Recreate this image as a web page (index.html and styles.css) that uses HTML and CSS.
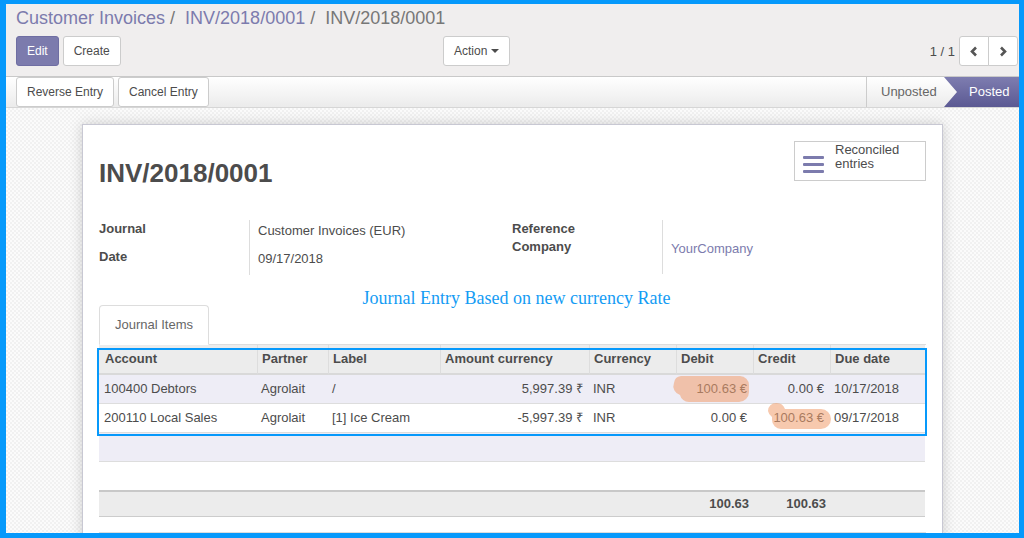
FILE: index.html
```html
<!DOCTYPE html>
<html>
<head>
<meta charset="utf-8">
<link rel="stylesheet" href="styles.css">
</head>
<body>
<div class="frame">
  <div class="app">
    <div class="cp">
      <div class="crumbs">
        <a class="crumb-link">Customer Invoices</a><span class="sep">/</span><a class="crumb-link">INV/2018/0001</a><span class="sep">/</span><span class="crumb-active">INV/2018/0001</span>
      </div>
      <div class="cp-row">
        <div class="cp-left">
          <button class="btn btn-primary">Edit</button>
          <button class="btn">Create</button>
        </div>
        <div class="cp-mid">
          <button class="btn">Action <span class="caret"></span></button>
        </div>
        <div class="pager">
          <span class="pager-val">1 / 1</span>
          <div class="btn-group">
            <button class="btn btn-icon"><svg width="8" height="11" viewBox="0 0 8 11"><polyline points="6,1.5 2,5.5 6,9.5" fill="none" stroke="#555" stroke-width="2.6"/></svg></button>
            <button class="btn btn-icon"><svg width="8" height="11" viewBox="0 0 8 11"><polyline points="2,1.5 6,5.5 2,9.5" fill="none" stroke="#555" stroke-width="2.6"/></svg></button>
          </div>
        </div>
      </div>
    </div>

    <div class="statusbar">
      <div class="sb-buttons">
        <button class="btn btn-sb">Reverse Entry</button>
        <button class="btn btn-sb">Cancel Entry</button>
      </div>
      <div class="sb-status">
        <span class="st st-unposted">Unposted</span>
        <span class="st st-posted">Posted</span>
      </div>
    </div>

    <div class="sheet-bg">
      <div class="sheet">
        <div class="sheet-head">
          <h1 class="title">INV/2018/0001</h1>
          <button class="stat-btn">
            <svg class="stat-icon" width="21" height="19" viewBox="0 0 21 19">
              <rect x="0" y="1" width="21" height="3" rx="1" fill="#7c7bad"/>
              <rect x="0" y="8" width="21" height="3" rx="1" fill="#7c7bad"/>
              <rect x="0" y="15" width="21" height="3" rx="1" fill="#7c7bad"/>
            </svg>
            <span class="stat-text">Reconciled<br>entries</span>
          </button>
        </div>

        <div class="groups">
          <div class="group group-left">
            <div class="lbl">Journal</div><div class="val">Customer Invoices (EUR)</div>
            <div class="lbl">Date</div><div class="val">09/17/2018</div>
          </div>
          <div class="group group-right">
            <div class="lbl">Reference</div><div class="val"></div>
            <div class="lbl">Company</div><div class="val"><a class="link">YourCompany</a></div>
          </div>
        </div>

        <div class="note">Journal Entry Based on new currency Rate</div>

        <div class="tabs">
          <div class="tab">Journal Items</div>
        </div>

        <div class="table-wrap">
          <table class="list">
            <colgroup>
              <col class="c-account"><col class="c-partner"><col class="c-label"><col class="c-amount"><col class="c-currency"><col class="c-debit"><col class="c-credit"><col class="c-due">
            </colgroup>
            <thead>
              <tr>
                <th>Account</th><th>Partner</th><th>Label</th><th>Amount currency</th><th>Currency</th><th>Debit</th><th>Credit</th><th>Due date</th>
              </tr>
            </thead>
            <tbody>
              <tr class="odd">
                <td>100400 Debtors</td><td>Agrolait</td><td>/</td><td class="num">5,997.39 ₹</td><td>INR</td><td class="num">100.63 €</td><td class="num">0.00 €</td><td>10/17/2018</td>
              </tr>
              <tr>
                <td>200110 Local Sales</td><td>Agrolait</td><td>[1] Ice Cream</td><td class="num">-5,997.39 ₹</td><td>INR</td><td class="num">0.00 €</td><td class="num">100.63 €</td><td>09/17/2018</td>
              </tr>
              <tr class="odd empty">
                <td colspan="8"></td>
              </tr>
              <tr class="empty last">
                <td colspan="8"></td>
              </tr>
            </tbody>
            <tfoot>
              <tr>
                <td></td><td></td><td></td><td></td><td></td><td class="num tot">100.63</td><td class="num tot">100.63</td><td></td>
              </tr>
            </tfoot>
          </table>
          <svg class="marks" width="826" height="120" viewBox="0 0 826 120">
            <g fill="rgba(240,158,110,0.56)">
              <path d="M582 31 H641 A9 9 0 0 1 650 40 V47 A10 10 0 0 1 640 57 H590 A9 9 0 0 1 581 50 A9 9 0 0 1 575 38 A8 8 0 0 1 582 31 Z"/>
              <path d="M677 58 A9 9 0 0 1 686 64 H722 A10 10 0 0 1 732 74 A10 10 0 0 1 722 84 H682 A9 9 0 0 1 673 75 V72 A9 9 0 0 1 669 66 A8 8 0 0 1 677 58 Z"/>
            </g>
          </svg>
          <div class="focus-box"></div>
        </div>
        <div class="after-line"></div>
      </div>
    </div>
  </div>
</div>
</body>
</html>
```

FILE: styles.css
```css
html, body {
  margin: 0;
  padding: 0;
}
body {
  background: #0699fb;
  font-family: "Liberation Sans", Arial, sans-serif;
  font-size: 13px;
  color: #4c4c4c;
}
.frame {
  box-sizing: border-box;
  height: 538px;
  padding: 4px 5px 5px 6px;
}
.app {
  height: 529px;
  overflow: hidden;
  background: #fff;
  display: flex;
  flex-direction: column;
}

/* control panel */
.cp {
  background: #f0eeee;
  padding: 1px 1px 10px 10px;
  border-bottom: 1px solid #c9c9c9;
  flex: none;
}
.crumbs {
  font-size: 18px;
  line-height: 26px;
  height: 26px;
  margin-bottom: 5px;
  white-space: nowrap;
}
.crumb-link {
  color: #7c7bad;
}
.crumb-active {
  color: #777;
}
.sep {
  color: #777;
  padding: 0 10px 0 5px;
}
.cp-row {
  display: flex;
  align-items: center;
  height: 30px;
}
.cp-left {
  width: 427px;
  display: flex;
  gap: 4px;
}
.cp-mid {
  display: flex;
}
.btn {
  box-sizing: border-box;
  height: 30px;
  padding: 0 10px;
  font-family: "Liberation Sans", Arial, sans-serif;
  font-size: 12px;
  color: #4c4c4c;
  background: #fff;
  border: 1px solid #ccc;
  border-radius: 3px;
  display: inline-flex;
  align-items: center;
  justify-content: center;
}
.btn-primary {
  background: #7c7bad;
  border-color: #6f6ea3;
  color: #fff;
}
.caret {
  display: inline-block;
  width: 0;
  height: 0;
  margin-left: 4px;
  border-top: 4px solid #4c4c4c;
  border-left: 4px solid transparent;
  border-right: 4px solid transparent;
}
.pager {
  margin-left: auto;
  display: flex;
  align-items: center;
  gap: 4px;
}
.pager-val {
  font-size: 13px;
  color: #4c4c4c;
}
.btn-group {
  display: flex;
}
.btn-icon {
  width: 30px;
  padding: 0;
}
.btn-group .btn-icon:first-child {
  border-radius: 3px 0 0 3px;
}
.btn-group .btn-icon:last-child {
  border-radius: 0 3px 3px 0;
  margin-left: -1px;
}

/* status bar */
.statusbar {
  flex: none;
  height: 30px;
  display: flex;
  padding-left: 10px;
  background: linear-gradient(#ffffff, #ebebeb);
  border-bottom: 1px solid #d6d6d6;
}
.sb-buttons {
  display: flex;
  gap: 4px;
}
.btn-sb {
  height: 30px;
}
.sb-status {
  margin-left: auto;
  display: flex;
  height: 30px;
}
.st {
  box-sizing: border-box;
  height: 30px;
  line-height: 30px;
  font-size: 13px;
}
.st-unposted {
  width: 78px;
  padding-left: 14px;
  border-left: 1px solid #ccc;
  color: #666;
}
.st-posted {
  width: 75px;
  padding-left: 25px;
  color: #fff;
  background: linear-gradient(#7e7db0, #5b5993);
  clip-path: polygon(0 0, 100% 0, 100% 100%, 0 100%, 13px 50%);
}

/* sheet */
.sheet-bg {
  flex: 1;
  min-height: 0;
  padding-top: 16px;
  background: repeating-conic-gradient(#f1f1f1 0 25%, #fbfbfb 0 50%) 0 0 / 4px 4px;
}
.sheet {
  box-sizing: border-box;
  width: 861px;
  margin-left: 76px;
  padding: 16px 16px 0;
  background: #fff;
  border: 1px solid #c8c8d3;
  box-shadow: 0 0 12px rgba(0, 0, 0, 0.18);
  min-height: 600px;
}
.sheet-head {
  display: flex;
  justify-content: space-between;
  align-items: flex-start;
}
.title {
  margin: 16px 0 0;
  font-size: 26px;
  line-height: 32px;
  font-weight: bold;
  color: #4c4c4c;
}
.stat-btn {
  box-sizing: border-box;
  width: 132px;
  height: 40px;
  padding: 0 0 0 8px;
  border: 1px solid #ccc;
  background: #fff;
  display: flex;
  align-items: flex-start;
  font-family: "Liberation Sans", Arial, sans-serif;
  text-align: left;
}
.stat-icon {
  margin-top: 13px;
  flex: none;
}
.stat-text {
  margin-top: 1px;
  margin-left: 11px;
  font-size: 13px;
  line-height: 14px;
  color: #4c4c4c;
}

.groups {
  display: flex;
  margin-top: 31px;
}
.group {
  width: 413px;
  display: grid;
}
.group-left {
  grid-template-columns: 151px 1fr;
  grid-template-rows: 28px 27px;
}
.group-right {
  grid-template-columns: 151px 1fr;
  grid-template-rows: 18px 36px;
}
.lbl {
  font-weight: bold;
  line-height: 18px;
  border-right: 1px solid #ddd;
}
.val {
  padding: 2px 0 0 8px;
  line-height: 18px;
}
.link {
  color: #7c7bad;
}

.note {
  margin-top: 13px;
  height: 20px;
  line-height: 20px;
  text-align: center;
  padding-left: 8px;
  font-family: "Liberation Serif", "Times New Roman", serif;
  font-size: 18px;
  color: #149cf4;
  position: relative;
}

.tabs {
  margin-top: -3px;
  display: flex;
  border-bottom: 1px solid #ddd;
}
.tab {
  padding: 10px 15px;
  line-height: 18px;
  color: #666;
  border: 1px solid #ddd;
  border-bottom-color: #fff;
  border-radius: 4px 4px 0 0;
  margin-bottom: -1px;
  background: #fff;
}

.table-wrap {
  position: relative;
}
.list {
  width: 826px;
  table-layout: fixed;
  border-collapse: separate;
  border-spacing: 0;
}
.c-account { width: 158px; }
.c-partner { width: 71px; }
.c-label { width: 112px; }
.c-amount { width: 149px; }
.c-currency { width: 87px; }
.c-debit { width: 77px; }
.c-credit { width: 77px; }
.c-due { width: 95px; }

.list th {
  background: #ececec;
  text-align: left;
  font-weight: bold;
  line-height: 18px;
  padding: 5px 4px;
  border-bottom: 2px solid #d9d9d9;
  border-left: 1px solid #ddd;
  white-space: nowrap;
  overflow: hidden;
}
.list th:first-child {
  border-left: none;
  padding-left: 6px;
}
.list td {
  line-height: 18px;
  padding: 5px 4px;
  border-bottom: 1px solid #ddd;
  white-space: nowrap;
  overflow: hidden;
}
.list td:first-child {
  padding-left: 5px;
}
.list tr.odd td {
  background: #eeedf6;
}
.list tr.empty td {
  height: 18px;
}
.list tr.last td {
  border-bottom: none;
}
.list td.num {
  text-align: right;
  padding-right: 6px;
}
.list tfoot td {
  background: #ececec;
  padding: 3px 4px;
  border-top: 2px solid #c8c8c8;
  border-bottom: 1px solid #ccc;
}
.list tfoot td.tot {
  font-weight: bold;
  padding-right: 4px;
}

.marks {
  position: absolute;
  left: 0;
  top: 0;
  pointer-events: none;
}
.focus-box {
  position: absolute;
  left: -2px;
  top: 3px;
  width: 830px;
  height: 88px;
  box-sizing: border-box;
  border: 2px solid #0699fb;
  pointer-events: none;
}
.after-line {
  margin-top: 15px;
  border-top: 1px solid #ddd;
}
```
